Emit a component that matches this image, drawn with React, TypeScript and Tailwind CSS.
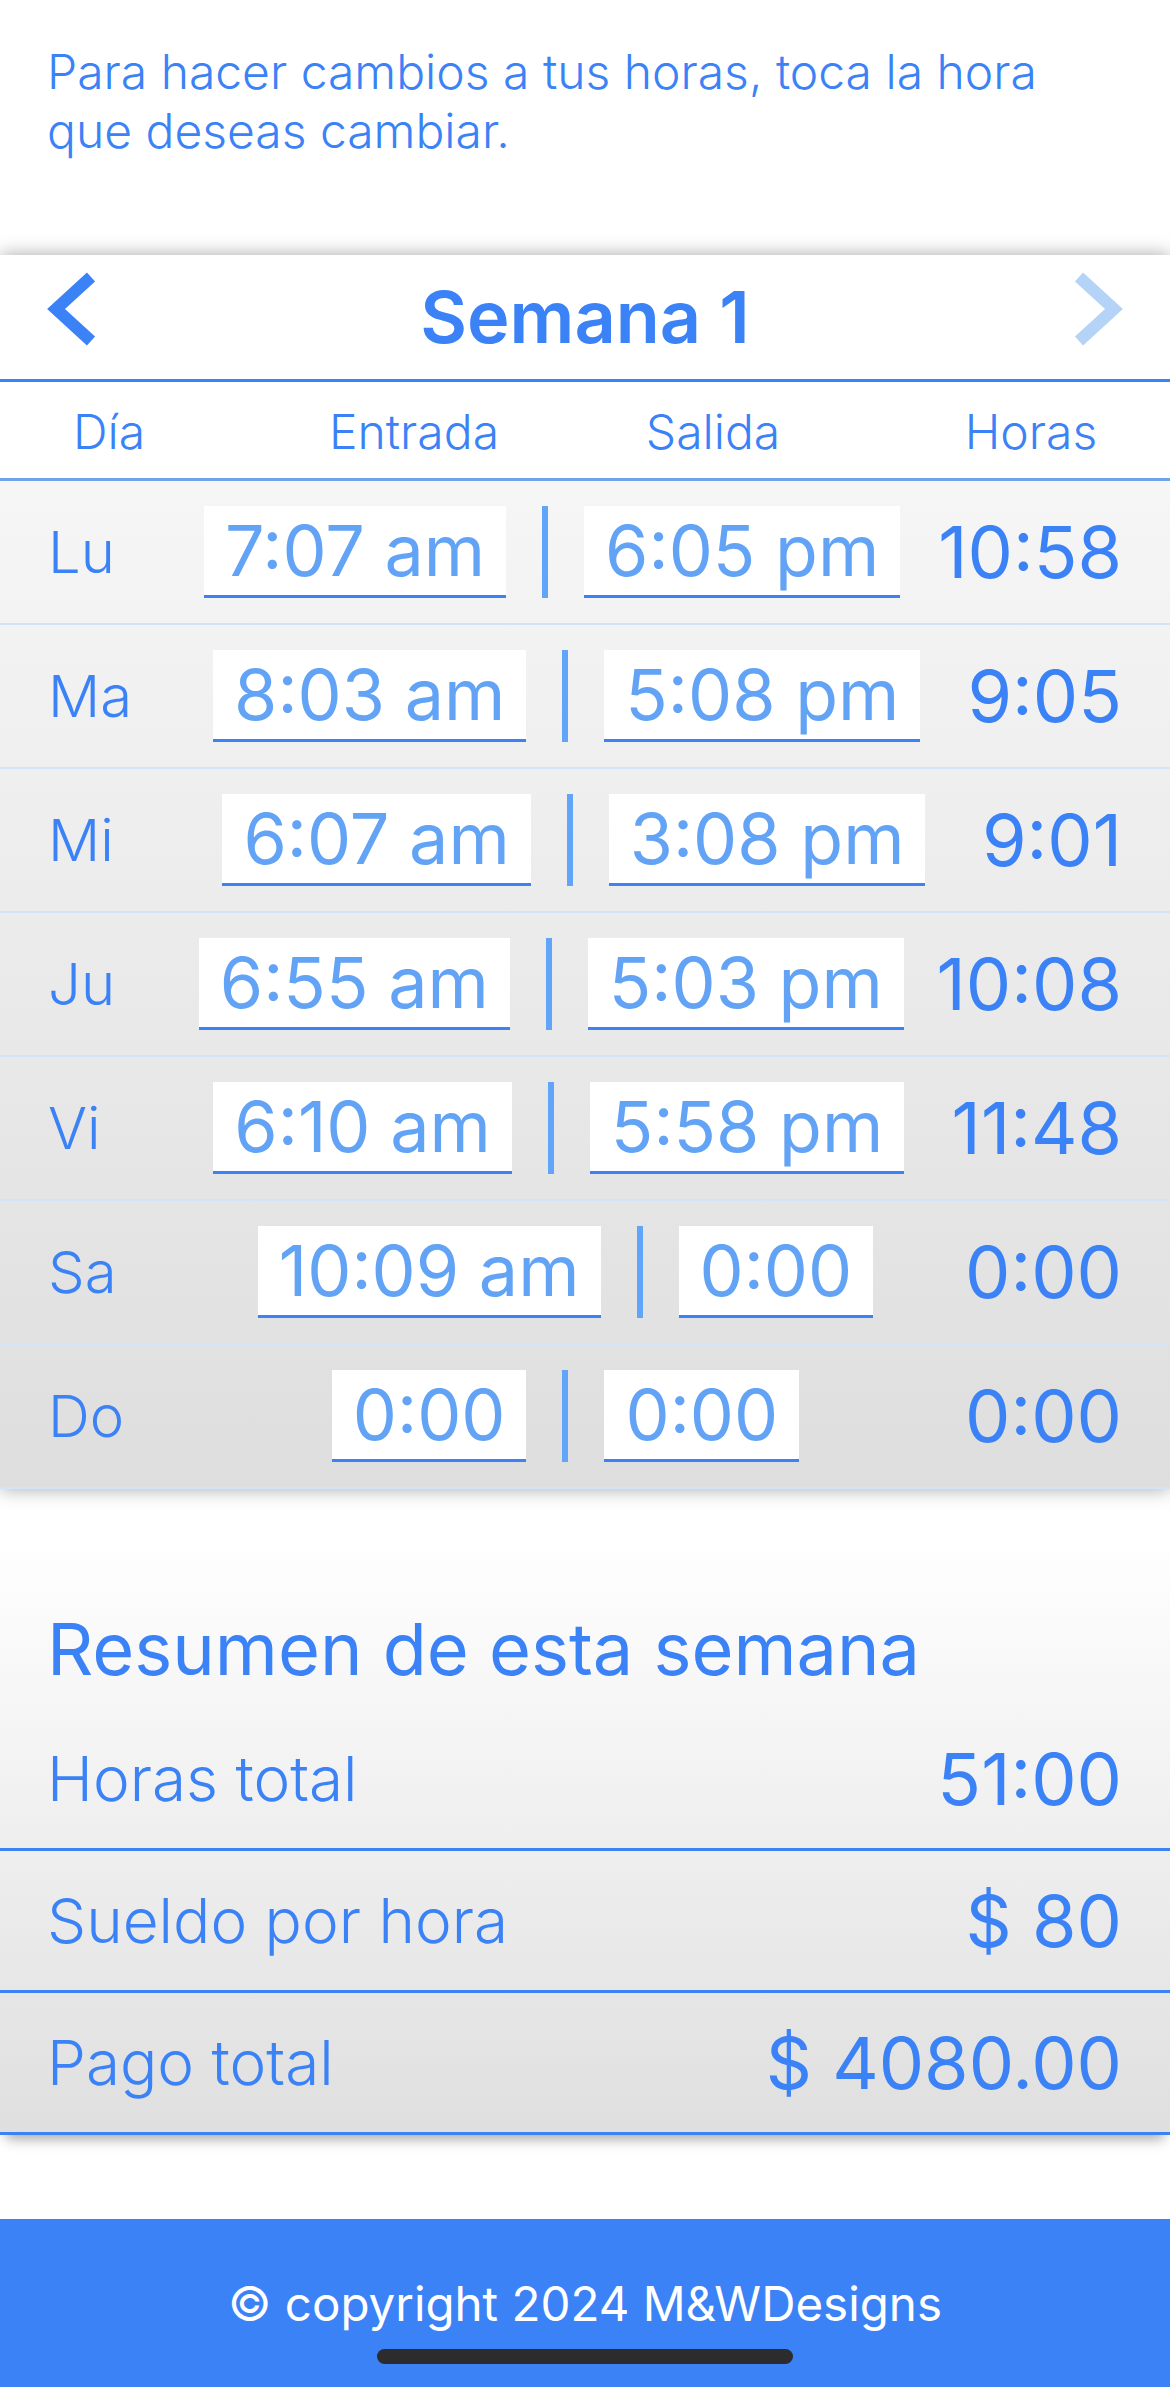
import React from "react";

const rows = [
  { day: "Lu", in: "7:07 am", out: "6:05 pm", hours: "10:58" },
  { day: "Ma", in: "8:03 am", out: "5:08 pm", hours: "9:05" },
  { day: "Mi", in: "6:07 am", out: "3:08 pm", hours: "9:01" },
  { day: "Ju", in: "6:55 am", out: "5:03 pm", hours: "10:08" },
  { day: "Vi", in: "6:10 am", out: "5:58 pm", hours: "11:48" },
  { day: "Sa", in: "10:09 am", out: "0:00", hours: "0:00" },
  { day: "Do", in: "0:00", out: "0:00", hours: "0:00" },
];

const summary = [
  { label: "Horas total", value: "51:00" },
  { label: "Sueldo por hora", value: "$ 80" },
  { label: "Pago total", value: "$ 4080.00" },
];

const TimeBox = ({ value }: { value: string }) => (
  <div className="h-[92px] bg-white border-b-[3px] border-[#3b82f6] px-[21px] flex items-center">
    <span className="text-[70px] leading-none text-[#62a3f5]">{value}</span>
  </div>
);

const Chevron = ({ dir, color }: { dir: "left" | "right"; color: string }) => (
  <svg width="56" height="80" viewBox="0 0 56 80" className="-mt-[16px]">
    <path
      d={dir === "left" ? "M47 8 L12 40 L47 72" : "M9 8 L44 40 L9 72"}
      fill="none"
      stroke={color}
      strokeWidth="12"
      strokeLinejoin="miter"
    />
  </svg>
);

export default function App() {
  return (
    <div className="w-[1170px] bg-white font-['Inter','Liberation_Sans',sans-serif]">
      {/* intro */}
      <p className="px-[47px] pt-[42px] pb-[95px] max-w-[1120px] text-[48px] leading-[59px] font-light text-[#3b82f6]">
        Para hacer cambios a tus horas, toca la hora que deseas cambiar.
      </p>

      {/* week table */}
      <div className="shadow-[0_0_18px_rgba(0,0,0,0.35)]">
        <div className="h-[127px] bg-white flex items-center justify-between px-[44px] border-b-[3px] border-[#3b82f6]">
          <Chevron dir="left" color="#3b82f6" />
          <h1 className="text-[72px] leading-none font-semibold text-[#3b82f6]">Semana 1</h1>
          <Chevron dir="right" color="#b5d3f7" />
        </div>
        <div className="h-[99px] bg-white flex items-center pl-[52px] pt-[3px] border-b-[3px] border-[#70a4ea] text-[48px] leading-none font-light text-[#3b82f6]">
          <div className="w-[114px] text-center">Día</div>
          <div className="ml-[148px] w-[200px] text-center">Entrada</div>
          <div className="ml-[99px] w-[200px] text-center">Salida</div>
          <div className="ml-[133px] w-[170px] text-center">Horas</div>
        </div>
        <div className="bg-gradient-to-b from-[#f6f6f6] to-[#dedede]">
          {rows.map((r) => (
            <div
              key={r.day}
              className="h-[144px] flex items-center justify-between pl-[48px] pr-[48px] border-b-2 border-[#d3e4f9]"
            >
              <div className="w-[118px] text-[58px] leading-none font-light text-[#3b82f6]">{r.day}</div>
              <div className="flex items-center">
                <TimeBox value={r.in} />
                <div className="mx-[36px] w-[6px] h-[92px] bg-[#60a5fa]" />
                <TimeBox value={r.out} />
              </div>
              <div className="text-[72px] leading-none text-[#3b82f6]">{r.hours}</div>
            </div>
          ))}
        </div>
      </div>

      {/* weekly summary */}
      <div className="mt-[48px] bg-gradient-to-b from-white to-[#dfdfdf] shadow-[0_10px_12px_-6px_rgba(0,0,0,0.35)]">
        <h2 className="px-[47px] pt-[76px] pb-[24px] text-[72px] leading-none text-[#3b82f6]">
          Resumen de esta semana
        </h2>
        {summary.map((s) => (
          <div
            key={s.label}
            className="h-[142px] flex items-center justify-between pl-[47px] pr-[48px] border-b-[3px] border-[#3b82f6]"
          >
            <span className="text-[62px] leading-none font-light text-[#3b82f6]">{s.label}</span>
            <span className="text-[72px] leading-none text-[#3b82f6]">{s.value}</span>
          </div>
        ))}
      </div>

      {/* footer */}
      <footer className="mt-[84px] h-[168px] bg-[#3b82f6] flex flex-col items-center pt-[61px]">
        <p className="text-[47.5px] leading-none text-white">© copyright 2024 M&amp;WDesigns</p>
        <div className="mt-[21px] w-[416px] h-[15px] rounded-full bg-[#2c2c2e]" />
      </footer>
    </div>
  );
}
